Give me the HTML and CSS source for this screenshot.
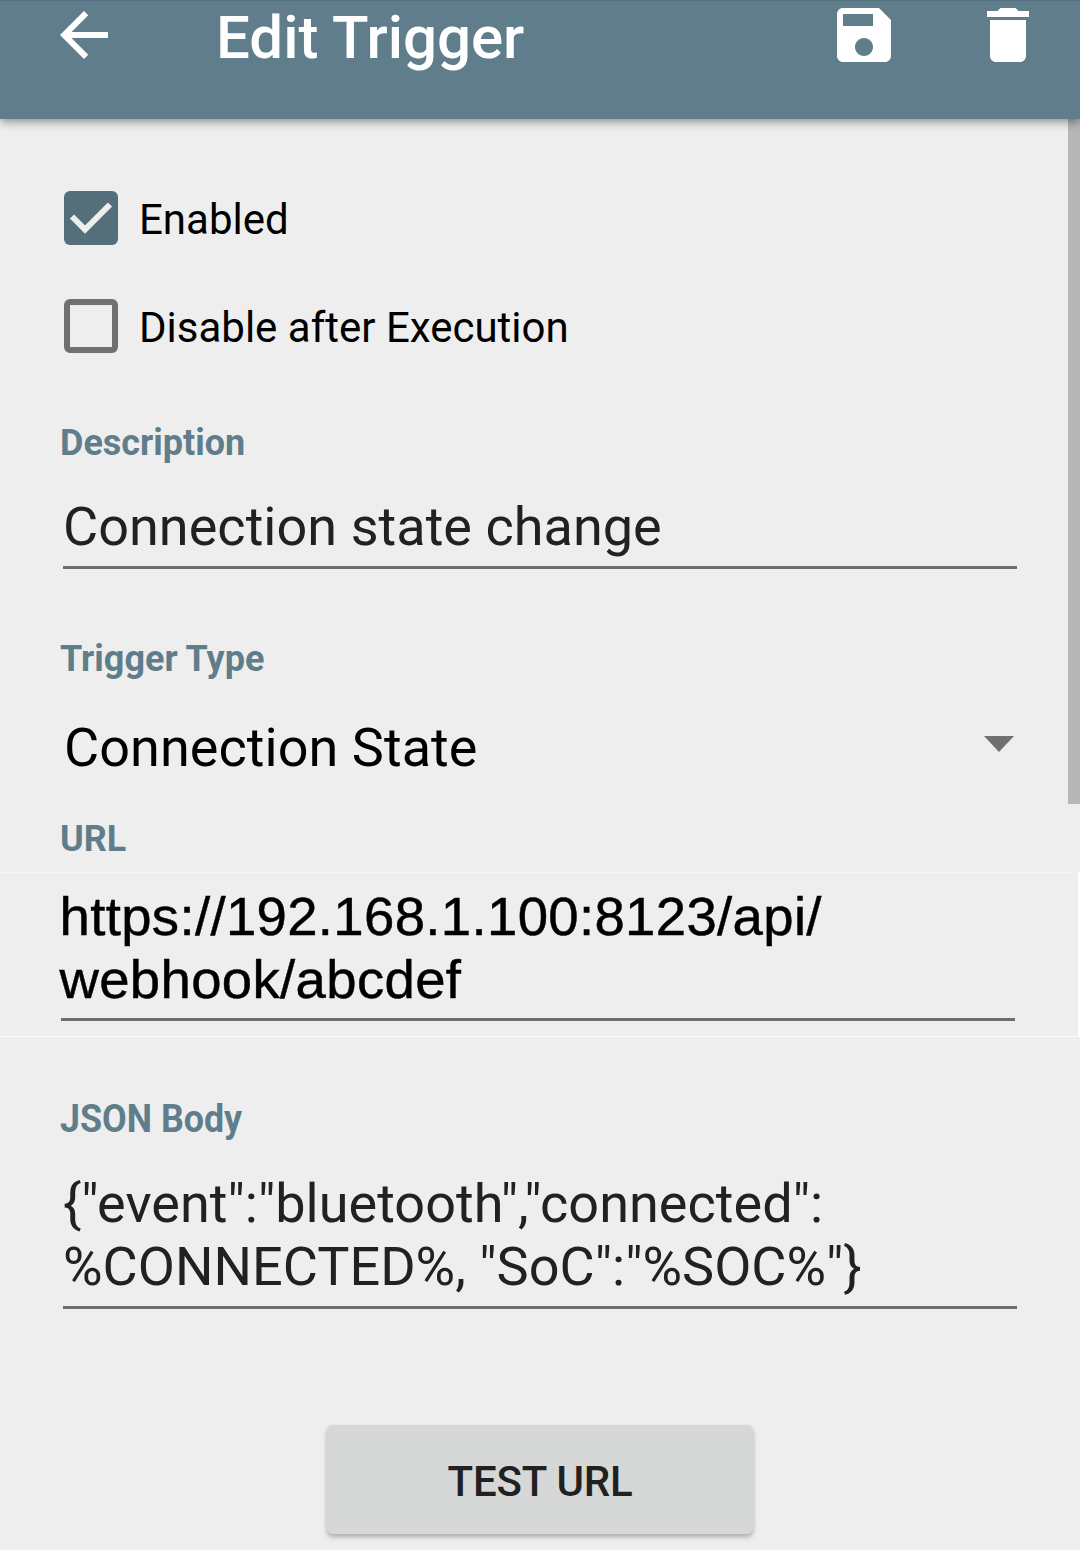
FILE: index.html
```html
<!DOCTYPE html>
<html lang="en">
<head>
<meta charset="utf-8">
<title>Edit Trigger</title>
<link rel="stylesheet" href="styles.css">
</head>
<body>
<div class="screen">
  <header class="toolbar">
    <svg class="icon" viewBox="0 0 24 24"><path d="M20 11H7.83l5.59-5.59L12 4l-8 8 8 8 1.41-1.41L7.83 13H20v-2z"/></svg>
    <h1 class="title">Edit Trigger</h1>
    <svg class="icon" viewBox="0 0 24 24"><path d="M17 3H5c-1.11 0-2 .9-2 2v14c0 1.1.89 2 2 2h14c1.1 0 2-.9 2-2V7l-4-4zm-5 16c-1.66 0-3-1.34-3-3s1.34-3 3-3 3 1.34 3 3-1.34 3-3 3zm3-10H5V5h10v4z"/></svg>
    <svg class="icon" viewBox="0 0 24 24"><path d="M6 19c0 1.1.9 2 2 2h8c1.1 0 2-.9 2-2V7H6v12zM19 4h-3.5l-1-1h-5l-1 1H5v2h14V4z"/></svg>
  </header>
  <main class="form">
    <div class="check-row">
      <span class="box checked"><svg viewBox="0 0 54 54"><path d="M8 25.500L21 38.500L46 13.500" /></svg></span>
      <span class="check-label">Enabled</span>
    </div>
    <div class="check-row">
      <span class="box"></span>
      <span class="check-label">Disable after Execution</span>
    </div>
    <section class="field description">
      <h2 class="label">Description</h2>
      <div class="input"><span>Connection state change</span></div>
    </section>
    <section class="field type">
      <h2 class="label">Trigger Type</h2>
      <div class="select"><span>Connection State</span><i class="caret"></i></div>
    </section>
    <section class="field url">
      <h2 class="label">URL</h2>
      <div class="url-panel"><div class="input url-input"><span>https://192.168.1.100:8123/api/</span><br><span>webhook/abcdef</span></div></div>
    </section>
    <section class="field json">
      <h2 class="label json-label">JSON Body</h2>
      <div class="input"><span>{"event":"bluetooth","connected":</span><br><span>%CONNECTED%, "SoC":"%SOC%"}</span></div>
    </section>
    <button class="button">TEST URL</button>
  </main>
  <div class="scrollbar"></div>
</div>
</body>
</html>
```
FILE: styles.css
```css
* { box-sizing: border-box; }

body {
  margin: 0;
  background: #fff;
  font-family: Roboto, "Liberation Sans", sans-serif;
}

.screen {
  position: relative;
  width: 1080px;
  height: 1550px;
  overflow: hidden;
  background: #eee;
}

.toolbar {
  position: relative;
  z-index: 1;
  display: flex;
  align-items: flex-start;
  height: 119px;
  padding: 0 36px 0 48px;
  background: #607d8b;
  border-top: 1px solid #557180;
  box-shadow: 0 3px 9px rgba(0, 0, 0, .4);
}

.icon {
  flex: none;
  width: 72px;
  height: 72px;
  margin-top: -2px;
  fill: #fff;
}

.icon + .icon { margin-left: 72px; }

.title {
  flex: 1;
  margin: 0 0 0 96px;
  padding-top: 2px;
  color: #fff;
  font-size: 60px;
  font-weight: 500;
  line-height: 70px;
  white-space: nowrap;
}

.form {
  display: flex;
  flex-direction: column;
  padding-top: 72px;
}

.check-row {
  display: flex;
  gap: 21px;
  height: 54px;
  margin: 0 0 54px 64px;
}

.box {
  width: 54px;
  height: 54px;
  border: 6px solid #707070;
  border-radius: 6px;
}

.checked {
  border: 0;
  background: #546e7a;
}

.box svg {
  display: block;
  fill: none;
  stroke: #eee;
  stroke-width: 6;
}

.check-label {
  font-size: 42px;
  line-height: 58px;
  color: #000;
}

.label {
  margin: 0 0 0 60px;
  color: #607d8b;
  font-size: 36px;
  font-weight: 700;
  line-height: 42px;
}

.json-label {
  width: max-content;
  font-size: 39px;
  transform: scaleX(.918);
  transform-origin: left;
}

.input {
  margin: 31px 63px 0;
  padding-bottom: 8px;
  border-bottom: 3px solid #6e6e6e;
  color: #212121;
  font-size: 54px;
  letter-spacing: .03px;
  line-height: 63px;
  white-space: nowrap;
}

.description { margin-top: 15px; }
.type { margin-top: 69px; }

.select {
  display: flex;
  justify-content: space-between;
  margin: 36px 66px 0 64px;
  font-size: 54px;
  letter-spacing: .05px;
  line-height: 63px;
  color: #000;
}

.caret {
  width: 30px;
  height: 16px;
  margin-top: 20px;
  background: #707070;
  clip-path: polygon(0 0, 100% 0, 50% 100%);
}

.url { margin-top: 39px; }

.url-panel {
  height: 165px;
  margin-top: 12px;
  padding-top: 12px;
  border-top: 1px solid #f4f4f4;
  border-bottom: 1px solid #fcfcfc;
  border-right: 2px solid #fff;
}

.url-input {
  height: 136px;
  margin: 0 63px 0 61px;
  padding-bottom: 7px;
  color: #000;
  font-family: "Liberation Sans", sans-serif;
  font-size: 54.500px;
  letter-spacing: .35px;
  -webkit-text-stroke: .5px #000;
}

.url-input span { margin-left: -1.500px; }

.json { margin-top: 61px; }
.json .input { margin-top: 32px; }

.button {
  align-self: center;
  width: 426px;
  height: 109px;
  margin: 116px 0 0;
  padding: 5px 0 0;
  border: 0;
  border-radius: 6px;
  background: #d6d7d7;
  box-shadow: 0 3px 5px rgba(0, 0, 0, .28);
  color: #212121;
  font: 500 42px/50px Roboto, sans-serif;
  letter-spacing: -.2px;
}

.scrollbar {
  position: absolute;
  top: 119px;
  right: 0;
  width: 12px;
  height: 685px;
  background: #b6b6b6;
}
```
